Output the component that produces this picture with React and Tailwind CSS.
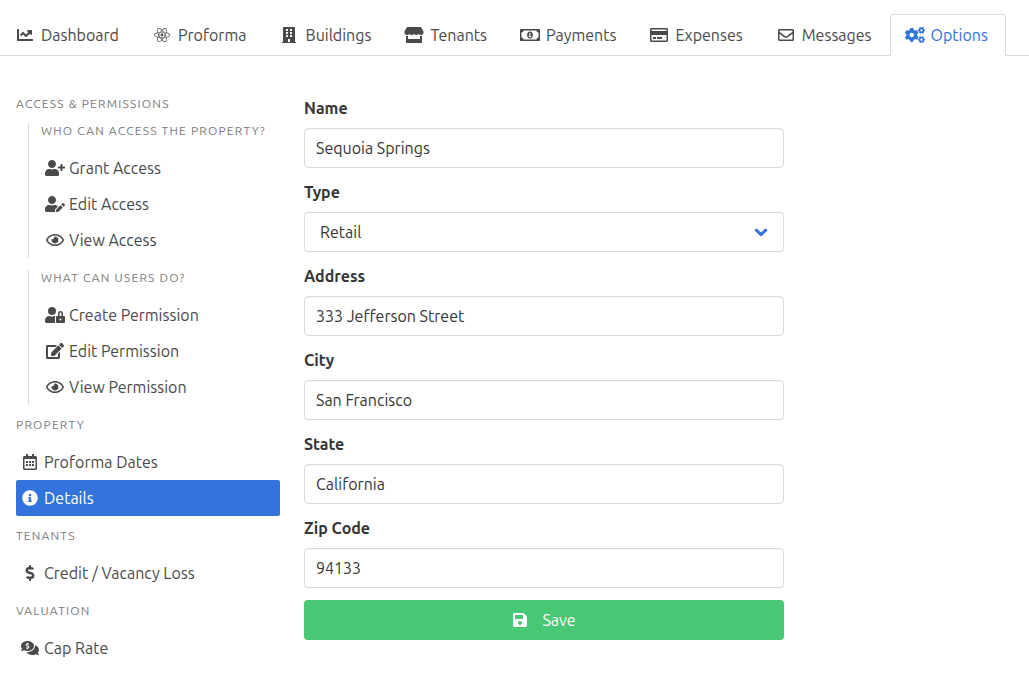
import React, { useState } from "react";
import {
  FaChartLine,
  FaReact,
  FaBuilding,
  FaStore,
  FaRegMoneyBillAlt,
  FaRegCreditCard,
  FaRegEnvelope,
  FaCogs,
  FaUserPlus,
  FaUserEdit,
  FaRegEye,
  FaUserLock,
  FaEdit,
  FaRegCalendarAlt,
  FaInfoCircle,
  FaDollarSign,
  FaCommentsDollar,
  FaSave,
} from "react-icons/fa";

const TABS = [
  { label: "Dashboard", Icon: FaChartLine },
  { label: "Proforma", Icon: FaReact },
  { label: "Buildings", Icon: FaBuilding },
  { label: "Tenants", Icon: FaStore },
  { label: "Payments", Icon: FaRegMoneyBillAlt },
  { label: "Expenses", Icon: FaRegCreditCard },
  { label: "Messages", Icon: FaRegEnvelope },
  { label: "Options", Icon: FaCogs, active: true },
];

function IconBox({ Icon }) {
  return (
    <span className="flex h-6 w-6 shrink-0 items-center justify-center">
      <Icon className="h-4 w-6 shrink-0" aria-hidden="true" />
    </span>
  );
}

function Tab({ label, Icon, active }) {
  return (
    <li className="-mb-px">
      <a
        href="#"
        aria-current={active ? "page" : undefined}
        className={
          active
            ? "flex items-center gap-1 rounded-t border border-[#dbdbdb] border-b-white bg-white py-2 pr-[17px] pl-3 leading-6 text-[#3273dc]"
            : "flex items-center gap-1 rounded-t border border-transparent border-b-[#dbdbdb] py-2 pr-[17px] pl-3 leading-6 text-[#4a4a4a]"
        }
      >
        <IconBox Icon={Icon} />
        <span>{label}</span>
      </a>
    </li>
  );
}

function MenuLabel({ children }) {
  return (
    <p className="mb-3 text-xs leading-[15px] tracking-widest whitespace-nowrap text-[#7a7a7a] uppercase">
      {children}
    </p>
  );
}

function MenuItem({ label, Icon, active }) {
  return (
    <li>
      <a
        href="#"
        aria-current={active ? "page" : undefined}
        className={
          active
            ? "flex h-9 items-center gap-0.5 rounded-xs bg-[#3273dc] px-0.5 text-white"
            : "flex h-9 items-center gap-0.5 rounded-xs px-0.5 text-[#4a4a4a]"
        }
      >
        <IconBox Icon={Icon} />
        <span>{label}</span>
      </a>
    </li>
  );
}

function SubMenu({ title, children }) {
  return (
    <div className="mb-3 ml-3 border-l border-[#dbdbdb] pl-3">
      <MenuLabel>{title}</MenuLabel>
      <ul>{children}</ul>
    </div>
  );
}

function Label({ htmlFor, children }) {
  return (
    <label htmlFor={htmlFor} className="mb-2 block leading-6 font-bold text-[#363636]">
      {children}
    </label>
  );
}

function TextField({ id, label, initial }) {
  const [value, setValue] = useState(initial);
  return (
    <div className="mb-3">
      <Label htmlFor={id}>{label}</Label>
      <input
        id={id}
        type="text"
        value={value}
        onChange={(e) => setValue(e.target.value)}
        className="block h-10 w-full rounded border border-[#dbdbdb] bg-white px-[11px] text-[#363636] shadow-[inset_0_1px_2px_rgba(10,10,10,0.05)]"
      />
    </div>
  );
}

function TypeField() {
  return (
    <div className="mb-3">
      <Label htmlFor="type">Type</Label>
      <div className="relative">
        <select
          id="type"
          defaultValue="Retail"
          className="block h-10 w-full appearance-none rounded border border-[#dbdbdb] bg-white pr-10 pl-[15px] text-[#363636]"
        >
          <option>Retail</option>
          <option>Office</option>
          <option>Industrial</option>
          <option>Multifamily</option>
        </select>
        <svg
          viewBox="0 0 14 10"
          className="pointer-events-none absolute top-4 right-4 h-2.5 w-3.5 text-[#3273dc]"
          fill="none"
          stroke="currentColor"
          strokeWidth="3"
          strokeLinecap="round"
          strokeLinejoin="round"
          aria-hidden="true"
        >
          <path d="M2.3 2.2 7 6.6l4.7-4.4" />
        </svg>
      </div>
    </div>
  );
}

export default function App() {
  return (
    <div className="bg-white pt-3.5 font-['Ubuntu','Noto_Sans',sans-serif] text-base">
      <nav aria-label="Property sections">
        <ul className="flex border-b border-[#dbdbdb]">
          {TABS.map((tab) => (
            <Tab key={tab.label} {...tab} />
          ))}
        </ul>
      </nav>

      <div className="flex items-start gap-6 px-4 pt-10">
        <aside className="w-66 shrink-0">
          <MenuLabel>Access &amp; Permissions</MenuLabel>
          <SubMenu title="Who can access the property?">
            <MenuItem label="Grant Access" Icon={FaUserPlus} />
            <MenuItem label="Edit Access" Icon={FaUserEdit} />
            <MenuItem label="View Access" Icon={FaRegEye} />
          </SubMenu>
          <SubMenu title="What can users do?">
            <MenuItem label="Create Permission" Icon={FaUserLock} />
            <MenuItem label="Edit Permission" Icon={FaEdit} />
            <MenuItem label="View Permission" Icon={FaRegEye} />
          </SubMenu>
          <MenuLabel>Property</MenuLabel>
          <ul className="mb-3">
            <MenuItem label="Proforma Dates" Icon={FaRegCalendarAlt} />
            <MenuItem label="Details" Icon={FaInfoCircle} active />
          </ul>
          <MenuLabel>Tenants</MenuLabel>
          <ul className="mb-3">
            <MenuItem label="Credit / Vacancy Loss" Icon={FaDollarSign} />
          </ul>
          <MenuLabel>Valuation</MenuLabel>
          <ul>
            <MenuItem label="Cap Rate" Icon={FaCommentsDollar} />
          </ul>
        </aside>

        <form className="max-w-120 flex-1" onSubmit={(e) => e.preventDefault()}>
          <TextField id="name" label="Name" initial="Sequoia Springs" />
          <TypeField />
          <TextField id="address" label="Address" initial="333 Jefferson Street" />
          <TextField id="city" label="City" initial="San Francisco" />
          <TextField id="state" label="State" initial="California" />
          <TextField id="zip" label="Zip Code" initial="94133" />
          <button
            type="submit"
            className="flex h-10 w-full items-center justify-center gap-2.5 rounded bg-[#48c774] pr-4 pl-3 text-white"
          >
            <IconBox Icon={FaSave} />
            <span>Save</span>
          </button>
        </form>
      </div>
    </div>
  );
}
